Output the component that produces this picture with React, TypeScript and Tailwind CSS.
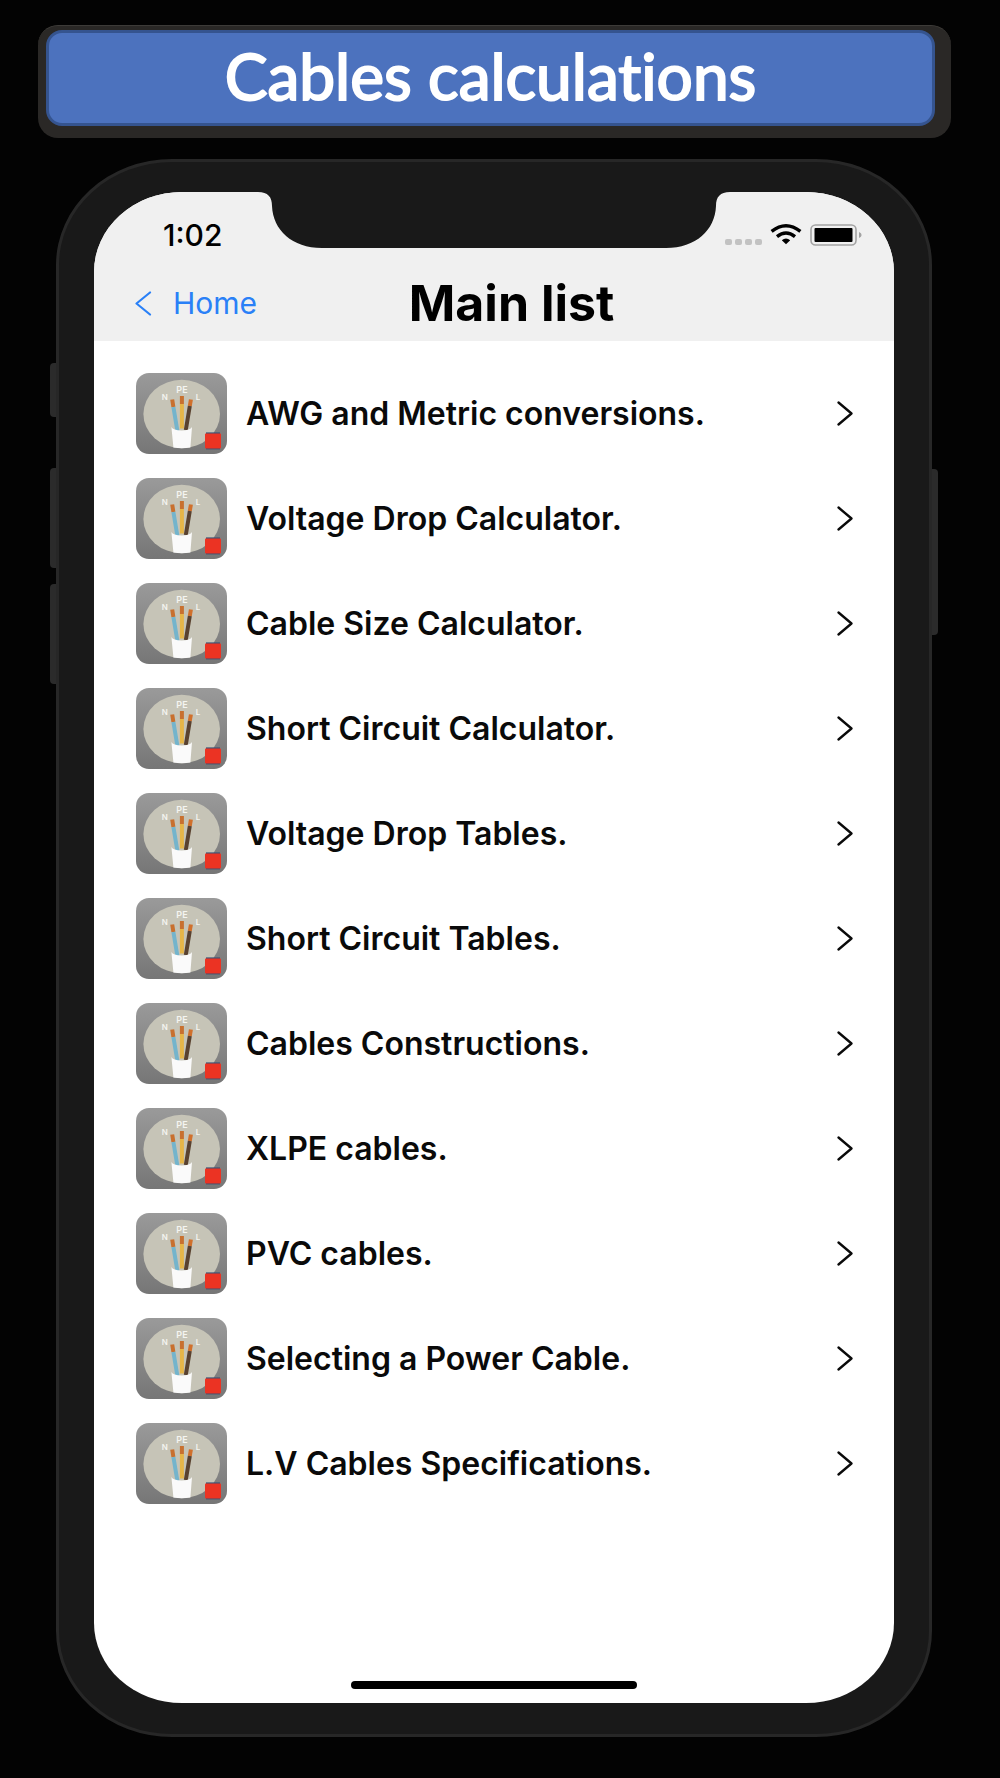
const items = [
  'AWG and Metric conversions.',
  'Voltage Drop Calculator.',
  'Cable Size Calculator.',
  'Short Circuit Calculator.',
  'Voltage Drop Tables.',
  'Short Circuit Tables.',
  'Cables Constructions.',
  'XLPE cables.',
  'PVC cables.',
  'Selecting a Power Cable.',
  'L.V Cables Specifications.',
];

function CableIcon() {
  return (
    <svg width="91" height="81" viewBox="0 0 91 81" className="shrink-0" aria-hidden="true">
      <defs>
        <linearGradient id="tile" x1="0" y1="0" x2="0" y2="1">
          <stop offset="0" stopColor="#9a9a9a" />
          <stop offset="1" stopColor="#767676" />
        </linearGradient>
      </defs>
      <rect width="91" height="81" rx="13" fill="url(#tile)" />
      <ellipse cx="45.7" cy="41" rx="38.3" ry="34.2" fill="#c6c4b7" />
      {/* Conductors */}
      <g strokeWidth="4" fill="none">
        <path d="M36.2 26.5 L37.4 34" stroke="#c8702f" />
        <path d="M37.4 34 L41.4 58" stroke="#74b4cc" />
        <path d="M45.9 23 V31" stroke="#c8702f" />
        <path d="M45.9 31 V55.5" stroke="#e6b548" />
        <path d="M54.9 26.5 L53.8 33" stroke="#d0702c" />
        <path d="M53.8 33 L49.8 57" stroke="#59412f" />
      </g>
      {/* Sheath */}
      <path d="M35.4 54 Q37 57.4 45.7 57.6 Q54.4 57.4 56 54 L54.4 74.6 Q45.7 76 37.4 74.6 Z" fill="#fafafa" />
      <g fill="#f4f4f0" fontFamily="Inter, sans-serif" fontWeight="600" textAnchor="middle">
        <text x="46" y="19.5" fontSize="9">PE</text>
        <text x="28.9" y="27" fontSize="8">N</text>
        <text x="62" y="27" fontSize="8">L</text>
      </g>
      <rect x="70" y="59.4" width="14" height="17" fill="#3b5274" />
      <rect x="69" y="60.6" width="16" height="14.8" rx="0.8" fill="#eb3323" />
    </svg>
  );
}

function Notch() {
  return (
    <svg
      width="472"
      height="56"
      viewBox="0 0 472 56"
      className="absolute top-0 left-1/2 -translate-x-1/2"
      aria-hidden="true"
    >
      <path
        d="M0 0 C10 0 14 5 14 14 C15 38 34 56 64 56 H408 C438 56 457 38 458 14 C458 5 462 0 472 0 Z"
        fill="#191919"
      />
    </svg>
  );
}

function StatusIcons() {
  return (
    <div className="flex h-[22px] items-end gap-2">
      <div className="mb-px flex gap-[3px]">
        {[0, 1, 2, 3].map((dot) => (
          <span key={dot} className="h-[6px] w-[7px] rounded-[2px] bg-[#c2c2c2]" />
        ))}
      </div>
      <svg width="32" height="22" viewBox="0 0 32 22" aria-hidden="true">
        <g fill="none" stroke="#000" strokeWidth="3.4">
          <path d="M1.6 7.4 Q16 -3.8 30.4 7.4" />
          <path d="M7 12.6 Q16 5.4 25 12.6" />
        </g>
        <path d="M11.8 16.2 Q16 13 20.2 16.2 L16 20.2 Z" fill="#000" />
      </svg>
      <svg width="52" height="22" viewBox="0 0 52 22" aria-hidden="true">
        <rect x="1" y="1" width="45" height="20" rx="4.5" fill="none" stroke="#a3a3a3" strokeWidth="1.6" />
        <rect x="4.5" y="4" width="38" height="14" rx="1" fill="#000" />
        <path d="M49 8 Q51.6 9 51.6 11 Q51.6 13 49 14 Z" fill="#a3a3a3" />
      </svg>
    </div>
  );
}

function Row({ label }: { label: string }) {
  return (
    <li>
      <button type="button" className="flex h-[105px] w-full items-center pr-[41px] pl-[42px] text-left">
        <CableIcon />
        <span className="ml-[19px] flex-1 text-[32px] leading-9 font-semibold text-[#0a0a0a]">{label}</span>
        <svg width="16" height="25" viewBox="0 0 16 25" aria-hidden="true">
          <path
            d="M1.5 1.5 L14.5 12.5 L1.5 23.5"
            fill="none"
            stroke="#0a0a0a"
            strokeWidth="2.3"
            strokeLinecap="round"
            strokeLinejoin="round"
          />
        </svg>
      </button>
    </li>
  );
}

export default function App() {
  return (
    <div className="min-h-screen bg-[#030303] pt-[25px] pb-10 font-['Inter',sans-serif]">
      {/* Banner */}
      <div className="mr-[49px] ml-[38px] rounded-[20px] border-t border-[#3d3b38] bg-[#2a2826] pt-1 pr-4 pb-3 pl-2">
        <div className="flex h-24 items-center justify-center rounded-[16px] border-3 border-[#35548f] bg-[#4c72be] pb-1">
          <h2 className="font-['Lato',sans-serif] text-[64px] leading-none font-normal text-white [-webkit-text-stroke:2px_white] [font-variant-ligatures:none]">
            Cables calculations
          </h2>
        </div>
      </div>

      {/* Phone */}
      <div className="relative mt-[21px] mr-[68px] ml-[56px]">
        <span className="absolute top-[204px] -left-[6px] h-[54px] w-3 rounded-l-sm bg-[#2b2b2b]" />
        <span className="absolute top-[309px] -left-[6px] h-[100px] w-3 rounded-l-sm bg-[#2b2b2b]" />
        <span className="absolute top-[425px] -left-[6px] h-[100px] w-3 rounded-l-sm bg-[#2b2b2b]" />
        <span className="absolute top-[310px] -right-[6px] h-[166px] w-3 rounded-r-sm bg-[#2b2b2b]" />

        <div className="relative rounded-[116px/106px] border-3 border-[#272727] bg-[#191919] px-[35px] pt-[30px] pb-[31px]">
          <div className="relative overflow-hidden rounded-[88px/80px] bg-white">
            <header className="bg-[#f0f0f0] pb-[13px]">
              <Notch />
              <div className="flex h-[86px] items-center justify-between pr-8 pl-[69px]">
                <span className="text-[30px] leading-9 font-medium text-black">1:02</span>
                <StatusIcons />
              </div>
              <nav className="flex h-[50px] items-center pl-10">
                <button type="button" className="flex items-center gap-[21px] text-[#2a80f7]">
                  <svg width="18" height="25" viewBox="0 0 18 25" aria-hidden="true">
                    <path
                      d="M16 1.5 L2.5 12.5 L16 23.5"
                      fill="none"
                      stroke="currentColor"
                      strokeWidth="2.2"
                      strokeLinecap="round"
                      strokeLinejoin="round"
                    />
                  </svg>
                  <span className="text-[30px] leading-9">Home</span>
                </button>
                <h1 className="mr-32 flex-1 text-center text-[50px] leading-none font-bold text-black">Main list</h1>
              </nav>
            </header>

            <ul className="pt-5">
              {items.map((label) => (
                <Row key={label} label={label} />
              ))}
            </ul>

            <div className="mt-[165px] mb-[14px] flex justify-center">
              <span className="h-2 w-[286px] rounded-full bg-black" />
            </div>
          </div>
        </div>
      </div>
    </div>
  );
}
